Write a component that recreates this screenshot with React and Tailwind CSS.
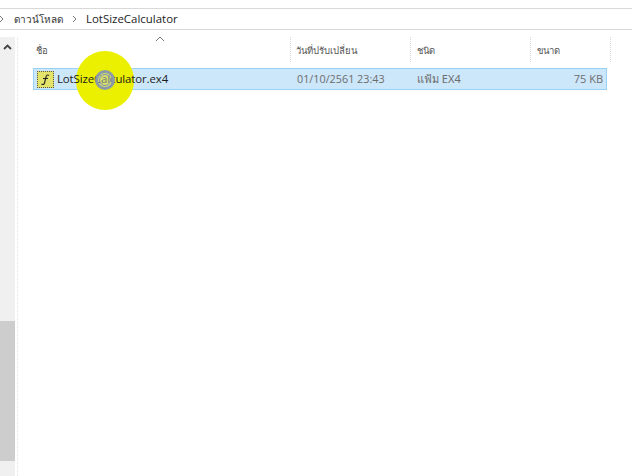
export default function App() {
  return (
    <div className="relative w-[632px] h-[476px] bg-white overflow-hidden font-['Open_Sans','Noto_Sans',sans-serif] text-[#1a1a1a] flex flex-col">
      <div className="h-[8px] shrink-0" />
      <div className="h-[22px] shrink-0 border-y border-[#d9d9d9] flex items-center text-[12px] leading-none">
        <svg width="6" height="8" viewBox="0 0 6 8" className="mr-[8px]"><path d="M0 1l3 3-3 3" fill="none" stroke="#777" strokeWidth="1" /></svg>
        <span className="font-['Noto_Sans','Liberation_Sans',sans-serif] text-[#333] w-[49px] whitespace-nowrap text-[10px] font-medium">ดาวน์โหลด</span>
        <svg width="6" height="8" viewBox="0 0 6 8" className="ml-[9px] mr-[8px]"><path d="M1 1l3 3-3 3" fill="none" stroke="#777" strokeWidth="1" /></svg>
        <span className="font-['Open_Sans',sans-serif] text-[11.45px] text-[#222] whitespace-nowrap">LotSizeCalculator</span>
      </div>
      <div className="h-[7px] shrink-0" />
      <div className="flex-1 flex min-h-0">
        <div className="w-[15px] shrink-0 bg-[#f0f0f0] flex flex-col">
          <div className="h-[16px] pt-[4px] flex items-center justify-center shrink-0">
            <svg width="9" height="6" viewBox="0 0 9 6"><path d="M1 5l3.5-3.5L8 5" fill="none" stroke="#444" strokeWidth="1.8" /></svg>
          </div>
          <div className="h-[268px] shrink-0" />
          <div className="h-[140px] shrink-0 bg-[#cdcdcd]" />
        </div>
        <div className="w-[3px] shrink-0 border-r border-dotted border-[#e4e4e4]" />
        <div className="flex-1 flex flex-col min-w-0 pl-[15px]">
          <div className="h-[25px] shrink-0 flex text-[9.5px] text-[#555] font-['Noto_Sans',sans-serif] relative">
            <div className="w-[258px] pl-[3px] pt-[7px] border-r border-dotted border-[#d8d8d8]">ชื่อ</div>
            <div className="w-[120px] pl-[5px] pt-[7px] border-r border-dotted border-[#d8d8d8] whitespace-nowrap">วันที่ปรับเปลี่ยน</div>
            <div className="w-[120px] pl-[6px] pt-[7px] border-r border-dotted border-[#d8d8d8]">ชนิด</div>
            <div className="w-[80px] pl-[6px] pt-[7px] border-r border-dotted border-[#d8d8d8]">ขนาด</div>
            <svg width="10" height="6" viewBox="0 0 10 6" className="absolute left-[122px] top-[-1px]"><path d="M1 5l4-4 4 4" fill="none" stroke="#777" strokeWidth="1" /></svg>
          </div>
          <div className="h-[6px] shrink-0" />
          <div className="w-[574px] h-[22px] shrink-0 flex items-center bg-[#cce6fa] border border-[#99d1f5] text-[12px]">
            <div className="relative z-20 w-[17px] h-[17px] ml-[3px] mr-[3px] shrink-0 bg-[#e4e36a] border border-dotted border-[#555] flex items-center justify-center">
              <svg width="13" height="13" viewBox="0 0 13 13"><path d="M10 2.5C8.5 1.5 7.5 2 7 4L5.5 10c-.4 1.5-1.5 2-3 1M4 5.5h5" fill="none" stroke="#222" strokeWidth="1.1" /></svg>
            </div>
            <span className="relative z-20 w-[239px] whitespace-nowrap text-[#1c1c1c] text-[11.4px] tracking-[-0.1px]">LotSizeCalculator.ex4</span>
            <span className="w-[120px] whitespace-nowrap text-[#6d6d6d] text-[10.8px] pl-[1px]">01/10/2561 23:43</span>
            <span className="w-[120px] whitespace-nowrap text-[#6d6d6d] text-[11px] pl-[1px] font-['Noto_Sans',sans-serif]">แฟ้ม EX4</span>
            <span className="flex-1 text-right pr-[3px] text-[#6d6d6d] text-[11px]">75 KB</span>
          </div>
        </div>
      </div>
      <div className="absolute z-10 left-[76px] top-[51px] w-[58px] h-[59px] rounded-full bg-[#ebf000]" />
      <div className="absolute z-30 left-[95px] top-[70px] w-[20px] h-[20px] rounded-full bg-[#c4d0d8]/50 border-[3px] border-[#8c9aa8]">
        <div className="m-[1px] w-[12px] h-[12px] rounded-full border border-[#7f8fb0]" />
      </div>
    </div>
  );
}
